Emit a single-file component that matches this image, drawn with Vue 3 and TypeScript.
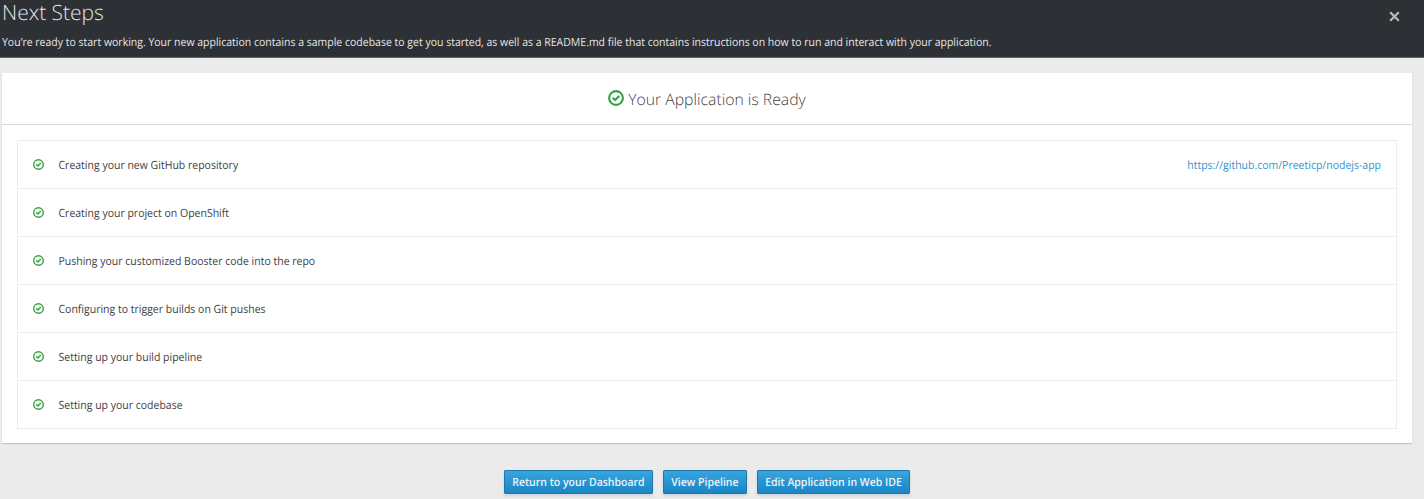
<script setup lang="ts">
interface Step {
  label: string
  link?: string
}

const steps: Step[] = [
  { label: 'Creating your new GitHub repository', link: 'https://github.com/Preeticp/nodejs-app' },
  { label: 'Creating your project on OpenShift' },
  { label: 'Pushing your customized Booster code into the repo' },
  { label: 'Configuring to trigger builds on Git pushes' },
  { label: 'Setting up your build pipeline' },
  { label: 'Setting up your codebase' },
]

const actions: string[] = ['Return to your Dashboard', 'View Pipeline', 'Edit Application in Web IDE']
</script>

<template>
  <div class="page">
    <header class="banner">
      <div>
        <h1>Next Steps</h1>
        <p>You’re ready to start working. Your new application contains a sample codebase to get you started, as well as a README.md file that contains instructions on how to run and interact with your application.</p>
      </div>
      <button class="close" aria-label="Close">
        <svg viewBox="0 0 10 10"><path d="M1.1 1.1 8.9 8.9M8.9 1.1 1.1 8.9" /></svg>
      </button>
    </header>

    <main class="card">
      <h2>
        <svg class="ok" viewBox="0 0 16 16"><circle cx="8" cy="8" r="6.9" /><path d="m4.7 7.8 2.4 2.3 4.2-4.2" /></svg>
        <span>Your Application is Ready</span>
      </h2>
      <ul class="steps">
        <li v-for="step in steps" :key="step.label">
          <svg class="ok" viewBox="0 0 16 16"><circle cx="8" cy="8" r="6.9" /><path d="m4.7 7.8 2.4 2.3 4.2-4.2" /></svg>
          <span class="label">{{ step.label }}</span>
          <a v-if="step.link">{{ step.link }}</a>
        </li>
      </ul>
    </main>

    <footer class="actions">
      <button v-for="action in actions" :key="action"><span>{{ action }}</span></button>
    </footer>
  </div>
</template>

<style>
body {
  background: #ebebeb;
}
</style>

<style scoped>
.page {
  box-sizing: border-box;
  height: 499px;
  overflow: hidden;
  background: #ebebeb;
  font-family: "Open Sans", "Noto Sans", sans-serif;
  font-size: 10.5px;
  text-rendering: geometricPrecision;
  color: #3f4245;
}
.banner {
  box-sizing: border-box;
  display: flex;
  justify-content: space-between;
  height: 58px;
  padding: 0 24px 0 2px;
  background: #2d3035;
  border-bottom: 1px solid #64666a;
  color: #e6e6e6;
}
h1 {
  margin: 0;
  font-size: 21px;
  font-weight: 300;
  line-height: 26px;
}
p {
  margin: 9px 0 0;
  line-height: 16px;
  white-space: nowrap;
  transform: scaleY(1.08);
}
.close {
  width: 11px;
  height: 11px;
  margin: 11px 0 0;
  padding: 0;
  border: 0;
  background: none;
}
.close svg {
  display: block;
  width: 11px;
  height: 11px;
  stroke: #b9babc;
  stroke-width: 2;
}
.card {
  box-sizing: border-box;
  height: 370px;
  margin: 15px 12px 0 2px;
  background: #fff;
  box-shadow: 0 1px 1px rgba(0, 0, 0, 0.16);
}
h2 {
  box-sizing: border-box;
  display: flex;
  align-items: center;
  justify-content: center;
  gap: 4px;
  height: 52px;
  margin: 0;
  border-bottom: 1px solid #dcdcdc;
  font-size: 15.75px;
  font-weight: 300;
}
.ok {
  flex: none;
  fill: none;
  stroke: #36a047;
  stroke-width: 2.1;
}
h2 .ok {
  width: 16px;
  height: 16px;
  margin-top: -1px;
}
.steps {
  margin: 15px 15px 0;
  padding: 0;
  list-style: none;
  border: 1px solid #ececec;
}
li {
  box-sizing: border-box;
  display: flex;
  align-items: center;
  height: 48px;
  padding: 0 15px 0 14.7px;
}
li:first-child {
  height: 47px;
}
li + li {
  border-top: 1px solid #ececec;
}
li .ok {
  width: 11px;
  height: 11px;
  margin: 0 14.8px 1px 0;
}
.label,
a {
  line-height: 16px;
  transform: translateY(0.5px) scaleY(1.08);
}
.label {
  flex: 1;
}
a {
  color: #3496cf;
}
.actions {
  display: flex;
  justify-content: center;
  gap: 10px;
  margin: 27px 10px 0 0;
}
.actions button {
  box-sizing: border-box;
  height: 24px;
  padding: 1px 7.3px 0;
  border: 1px solid #1c78ad;
  border-radius: 1px;
  background: linear-gradient(#39a5dc, #1985c5);
  box-shadow: 0 2px 3px rgba(3, 3, 3, 0.1);
  color: #ebf4fa;
  font-family: inherit;
  font-size: 10.5px;
  font-weight: 600;
  line-height: 20px;
  text-rendering: inherit;
}
.actions span {
  display: block;
  transform: scaleY(1.08);
}
</style>
